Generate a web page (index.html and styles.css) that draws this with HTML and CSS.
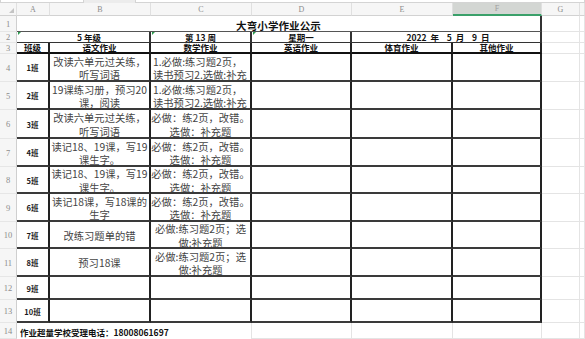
FILE: index.html
```html
<!DOCTYPE html>
<html lang="zh">
<head>
<meta charset="utf-8">
<title>大弯小学作业公示</title>
<link rel="stylesheet" href="styles.css">
</head>
<body>
<div class="topbar">
  <div class="tb-box tb-name"></div>
  <div class="tb-gap"></div>
  <div class="tb-box tb-formula"></div>
</div>
<div class="sheet">
  <!-- column headers -->
  <div class="ch corner"><span class="corner-tri"></span></div>
  <div class="ch">A</div>
  <div class="ch">B</div>
  <div class="ch">C</div>
  <div class="ch">D</div>
  <div class="ch">E</div>
  <div class="ch sel">F</div>
  <div class="ch">G</div>
  <div class="ch"></div>

  <!-- row 1 -->
  <div class="rh">1</div>
  <div class="title">大弯小学作业公示</div>
  <div class="g"></div><div class="g"></div>

  <!-- row 2 -->
  <div class="rh">2</div>
  <div class="r2 span-ab flag">5 年级</div>
  <div class="r2 flag">第 13 周</div>
  <div class="r2 flag">星期一</div>
  <div class="r2 span-ef date">2022 年  5 月  9 日</div>
  <div class="g"></div><div class="g"></div>

  <!-- row 3 -->
  <div class="rh">3</div>
  <div class="r3">班级</div>
  <div class="r3">语文作业</div>
  <div class="r3">数学作业</div>
  <div class="r3">英语作业</div>
  <div class="r3">体育作业</div>
  <div class="r3">其他作业</div>
  <div class="g"></div><div class="g"></div>

  <!-- row 4 -->
  <div class="rh">4</div>
  <div class="t cls">1班</div>
  <div class="t txt">改读六单元过关练，<br>听写词语</div>
  <div class="t txt left">1.必做:练习题2页，<br>读书预习2.选做:补充</div>
  <div class="t"></div><div class="t"></div><div class="t"></div>
  <div class="g"></div><div class="g"></div>

  <!-- row 5 -->
  <div class="rh">5</div>
  <div class="t cls">2班</div>
  <div class="t txt">19课练习册，预习20<br>课，阅读</div>
  <div class="t txt left">1.必做:练习题2页，<br>读书预习2.选做:补充</div>
  <div class="t"></div><div class="t"></div><div class="t"></div>
  <div class="g"></div><div class="g"></div>

  <!-- row 6 -->
  <div class="rh">6</div>
  <div class="t cls">3班</div>
  <div class="t txt">改读六单元过关练，<br>听写词语</div>
  <div class="t txt">必做：练2页，改错。<br>选做：补充题</div>
  <div class="t"></div><div class="t"></div><div class="t"></div>
  <div class="g"></div><div class="g"></div>

  <!-- row 7 -->
  <div class="rh">7</div>
  <div class="t cls">4班</div>
  <div class="t txt">读记18、19课，写19<br>课生字。</div>
  <div class="t txt">必做：练2页，改错。<br>选做：补充题</div>
  <div class="t"></div><div class="t"></div><div class="t"></div>
  <div class="g"></div><div class="g"></div>

  <!-- row 8 -->
  <div class="rh">8</div>
  <div class="t cls">5班</div>
  <div class="t txt">读记18、19课，写19<br>课生字。</div>
  <div class="t txt">必做：练2页，改错。<br>选做：补充题</div>
  <div class="t"></div><div class="t"></div><div class="t"></div>
  <div class="g"></div><div class="g"></div>

  <!-- row 9 -->
  <div class="rh">9</div>
  <div class="t cls">6班</div>
  <div class="t txt">读记18课，写18课的<br>生字</div>
  <div class="t txt">必做：练2页，改错。<br>选做：补充题</div>
  <div class="t"></div><div class="t"></div><div class="t"></div>
  <div class="g"></div><div class="g"></div>

  <!-- row 10 -->
  <div class="rh">10</div>
  <div class="t cls">7班</div>
  <div class="t txt">改练习题单的错</div>
  <div class="t txt">必做:练习题2页；选<br>做:补充题</div>
  <div class="t"></div><div class="t"></div><div class="t"></div>
  <div class="g"></div><div class="g"></div>

  <!-- row 11 -->
  <div class="rh">11</div>
  <div class="t cls">8班</div>
  <div class="t txt">预习18课</div>
  <div class="t txt">必做:练习题2页；选<br>做:补充题</div>
  <div class="t"></div><div class="t"></div><div class="t"></div>
  <div class="g"></div><div class="g"></div>

  <!-- row 12 -->
  <div class="rh">12</div>
  <div class="t cls">9班</div>
  <div class="t"></div><div class="t"></div>
  <div class="t"></div><div class="t"></div><div class="t"></div>
  <div class="g"></div><div class="g"></div>

  <!-- row 13 -->
  <div class="rh">13</div>
  <div class="t cls">10班</div>
  <div class="t"></div><div class="t"></div>
  <div class="t"></div><div class="t"></div><div class="t"></div>
  <div class="g"></div><div class="g"></div>

  <!-- row 14 -->
  <div class="rh">14</div>
  <div class="note">作业超量学校受理电话：18008061697</div>
  <div class="g"></div><div class="g"></div><div class="g"></div>
  <div class="g"></div><div class="g"></div>
</div>
</body>
</html>
```
FILE: styles.css
```css
* { box-sizing: border-box; }
html, body {
  margin: 0;
  padding: 0;
  background: #ffffff;
}
body {
  width: 585px;
  height: 339px;
  overflow: hidden;
  font-family: "Noto Sans CJK SC", "Noto Sans", sans-serif;
  color: #333;
}

.topbar {
  display: flex;
  height: 3px;
  background: #ececec;
}
.tb-box {
  background: #fff;
  border: 1px solid #d4d4d4;
  border-top: none;
}
.tb-name { width: 84px; }
.tb-gap { width: 51px; }
.tb-formula { flex: 1; }

.sheet {
  display: grid;
  grid-template-columns: 17px 33px 101px 101px 100px 101px 89px 38px 5px;
  grid-template-rows: 13px 16px 11px 11px 28px 28px 29px 28px 27px 28px 27px 28px 23px 23px 16px;
}

.sheet > div {
  min-width: 0;
  overflow: hidden;
}

/* column headers */
.ch {
  background: #f6f6f6;
  border-right: 1px solid #e0e0e0;
  border-bottom: 1px solid #d2d2d2;
  color: #8c8c8c;
  font-family: "Liberation Serif", serif;
  font-size: 8px;
  display: flex;
  align-items: center;
  justify-content: center;
}
.ch.sel {
  background: #d3d6d3;
  border-bottom: 2px solid #3aa06a;
  color: #a0a0a0;
}
.corner { position: relative; }
.corner-tri {
  width: 0;
  height: 0;
  border-left: 5px solid transparent;
  border-bottom: 5px solid #c4c4c4;
  margin-left: 6px;
  margin-top: 3px;
}

/* row headers */
.rh {
  background: #f6f6f6;
  border-right: 1px solid #cfcfcf;
  border-bottom: 1px solid #e6e6e6;
  color: #8c8c8c;
  font-family: "Liberation Serif", serif;
  font-size: 8.5px;
  display: flex;
  align-items: center;
  justify-content: center;
}

/* plain grid cells */
.g {
  border-right: 1px solid #e4e4e4;
  border-bottom: 1px solid #e4e4e4;
}

/* title row */
.title {
  grid-column: 2 / 8;
  border-right: 2px solid #333;
  border-bottom: 1px solid #555;
  display: flex;
  align-items: center;
  justify-content: center;
  padding-top: 3px;
  font-size: 10.5px;
  font-weight: 700;
  color: #111;
  letter-spacing: 0.1px;
}

/* row 2 */
.sheet > .r2 {
  position: relative;
  overflow: visible;
  border-right: 2px solid #333;
  border-bottom: 1px solid #333;
  display: flex;
  align-items: center;
  justify-content: center;
  font-size: 8.5px;
  font-weight: 700;
  color: #111;
  line-height: 10px;
  white-space: pre;
}
.span-ab { grid-column: 2 / 4; padding-left: 12px; }
.span-ef { grid-column: 6 / 8; }
.sheet > .date {
  font-weight: 600;
  word-spacing: 2px;
  padding-left: 4px;
}
.flag::before {
  content: "";
  position: absolute;
  left: 1px;
  top: 0;
  width: 0;
  height: 0;
  border-top: 3px solid #2c9a4e;
  border-right: 3px solid transparent;
}

/* row 3 */
.sheet > .r3 {
  overflow: visible;
  border-right: 2px solid #222;
  border-bottom: 2px solid #111;
  display: flex;
  align-items: flex-start;
  justify-content: center;
  font-size: 8.5px;
  font-weight: 700;
  color: #111;
  line-height: 9px;
}

/* table body cells */
.t {
  border-right: 2px solid #222;
  border-bottom: 2px solid #3a3a3a;
  display: flex;
  align-items: center;
  justify-content: center;
  white-space: nowrap;
}
.cls {
  font-size: 7.5px;
  font-weight: 700;
  color: #1a1a1a;
  padding-top: 1px;
}
.txt {
  font-size: 10.3px;
  line-height: 13.5px;
  color: #444;
  text-align: center;
  padding-top: 2px;
}
.txt.left {
  justify-content: flex-start;
  text-align: left;
  padding-left: 2px;
}

/* footer note row */
.note {
  grid-column: 2 / 5;
  border-right: 1px solid #e4e4e4;
  display: flex;
  align-items: flex-end;
  padding-left: 3px;
  padding-bottom: 1px;
  font-size: 8.5px;
  font-weight: 700;
  color: #111;
  white-space: nowrap;
}
```
